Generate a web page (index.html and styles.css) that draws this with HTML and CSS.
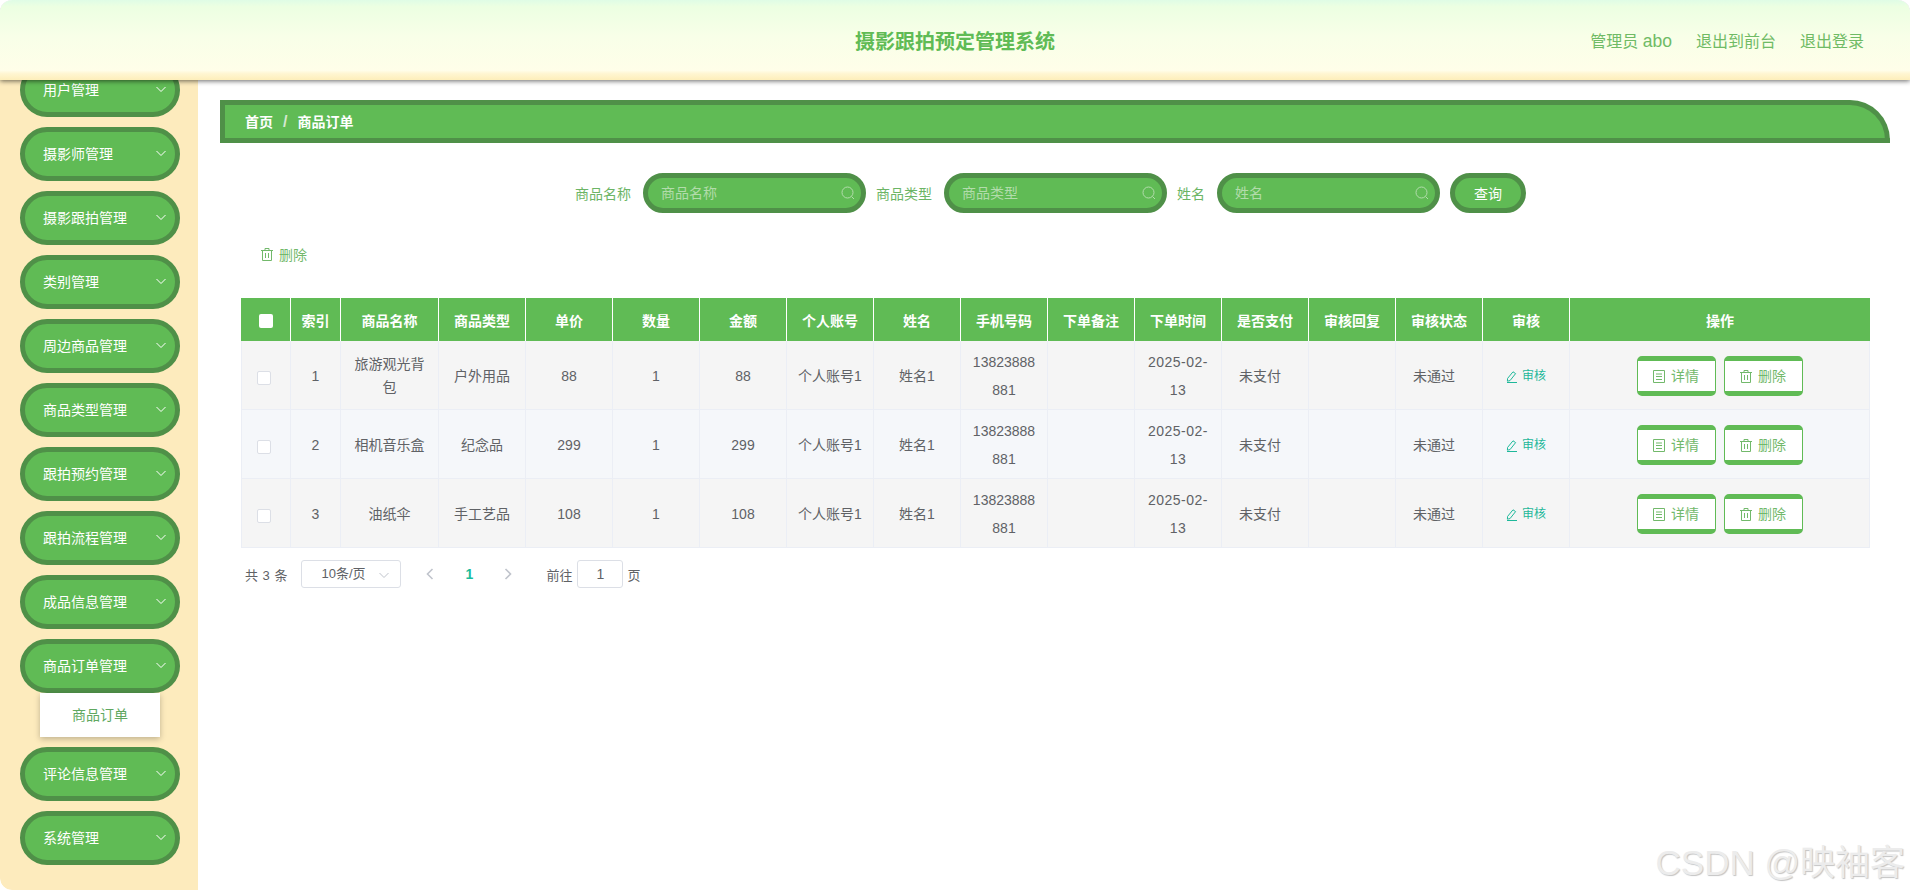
FILE: index.html
```html
<!DOCTYPE html>
<html lang="en">
  <head>
    <meta charset="UTF-8" />
    <title>摄影跟拍预定管理系统</title>
    <link rel="stylesheet" href="styles.css">
  </head>
  <body>
    <svg class="icon-defs" xmlns="http://www.w3.org/2000/svg">
      <symbol id="i-down" viewBox="0 0 12 12"><path d="M1.5 4 L6 8.5 L10.5 4" fill="none" stroke="currentColor" stroke-width="1"/></symbol>
      <symbol id="i-left" viewBox="0 0 8 12"><path d="M6.5 1 L1.5 6 L6.5 11" fill="none" stroke="currentColor" stroke-width="1.6"/></symbol>
      <symbol id="i-right" viewBox="0 0 8 12"><path d="M1.5 1 L6.5 6 L1.5 11" fill="none" stroke="currentColor" stroke-width="1.6"/></symbol>
      <symbol id="i-search" viewBox="0 0 14 14"><circle cx="6.5" cy="6.5" r="5.5" fill="none" stroke="currentColor" stroke-width="1"/><path d="M10.5 10.5 L13 13" stroke="currentColor" stroke-width="1"/></symbol>
      <symbol id="i-trash" viewBox="0 0 12 13"><path d="M0 2.5 H12 M4 2.5 V.5 H8 V2.5 M1.5 2.5 V12.5 H10.5 V2.5 M4.5 5 V10 M7.5 5 V10" fill="none" stroke="currentColor" stroke-width="1"/></symbol>
      <symbol id="i-doc" viewBox="0 0 12 13"><path d="M.5 .5 H11.5 V12.5 H.5 Z M3 4 H9 M3 6.5 H9 M3 9.5 H9" fill="none" stroke="currentColor" stroke-width="1"/></symbol>
      <symbol id="i-edit" viewBox="0 0 12 12"><path d="M7 .8 L9.6 2.6 L4 9.6 L1.4 10.2 L1.6 7.4 Z M1 11.5 H11" fill="none" stroke="currentColor" stroke-width="1"/></symbol>
    </svg>

    <div class="page">
      <header class="topbar">
        <div class="title">摄影跟拍预定管理系统</div>
        <div class="user-links">
          <span class="user-name">管理员 <span class="user-id">abo</span></span>
          <span>退出到前台</span>
          <span>退出登录</span>
        </div>
      </header>

      <div class="layout">
        <aside class="sidebar">
          <div class="menu-item">用户管理<svg class="menu-arrow"><use href="#i-down"/></svg></div>
          <div class="menu-item">摄影师管理<svg class="menu-arrow"><use href="#i-down"/></svg></div>
          <div class="menu-item">摄影跟拍管理<svg class="menu-arrow"><use href="#i-down"/></svg></div>
          <div class="menu-item">类别管理<svg class="menu-arrow"><use href="#i-down"/></svg></div>
          <div class="menu-item">周边商品管理<svg class="menu-arrow"><use href="#i-down"/></svg></div>
          <div class="menu-item">商品类型管理<svg class="menu-arrow"><use href="#i-down"/></svg></div>
          <div class="menu-item">跟拍预约管理<svg class="menu-arrow"><use href="#i-down"/></svg></div>
          <div class="menu-item">跟拍流程管理<svg class="menu-arrow"><use href="#i-down"/></svg></div>
          <div class="menu-item">成品信息管理<svg class="menu-arrow"><use href="#i-down"/></svg></div>
          <div class="menu-group">
            <div class="menu-item">商品订单管理<svg class="menu-arrow"><use href="#i-down"/></svg></div>
            <div class="submenu-item">商品订单</div>
          </div>
          <div class="menu-item">评论信息管理<svg class="menu-arrow"><use href="#i-down"/></svg></div>
          <div class="menu-item">系统管理<svg class="menu-arrow"><use href="#i-down"/></svg></div>
        </aside>

        <main class="main">
          <div class="breadcrumb">
            <b>首页</b><span class="crumb-sep">/</span><b>商品订单</b>
          </div>

          <div class="panel">
            <form class="search">
              <label>商品名称</label>
              <div class="search-input">
                <input type="text" placeholder="商品名称" />
                <svg class="search-icon"><use href="#i-search"/></svg>
              </div>
              <label>商品类型</label>
              <div class="search-input">
                <input type="text" placeholder="商品类型" />
                <svg class="search-icon"><use href="#i-search"/></svg>
              </div>
              <label>姓名</label>
              <div class="search-input">
                <input type="text" placeholder="姓名" />
                <svg class="search-icon"><use href="#i-search"/></svg>
              </div>
              <button type="button" class="search-btn">查询</button>
            </form>

            <div class="toolbar">
              <svg class="btn-icon"><use href="#i-trash"/></svg>删除
            </div>

            <table class="orders">
              <colgroup>
                <col class="col-s" /><col class="col-s" /><col class="col-name" />
                <col /><col /><col /><col /><col /><col /><col /><col /><col /><col /><col /><col /><col />
                <col class="col-ops" />
              </colgroup>
              <thead>
                <tr>
                  <th><span class="check check-head"></span></th>
                  <th>索引</th><th>商品名称</th><th>商品类型</th><th>单价</th><th>数量</th><th>金额</th>
                  <th>个人账号</th><th>姓名</th><th>手机号码</th><th>下单备注</th><th>下单时间</th>
                  <th>是否支付</th><th>审核回复</th><th>审核状态</th><th>审核</th><th>操作</th>
                </tr>
              </thead>
              <tbody>
                <tr>
                  <td><span class="check"></span></td>
                  <td>1</td><td>旅游观光背包</td><td>户外用品</td><td>88</td><td>1</td><td>88</td>
                  <td>个人账号1</td><td>姓名1</td><td class="phone">13823888881</td><td></td><td class="date">2025-02-13</td>
                  <td class="status">未支付</td><td></td><td class="status">未通过</td>
                  <td><span class="audit"><svg class="audit-icon"><use href="#i-edit"/></svg>审核</span></td>
                  <td><span class="row-btn"><svg class="btn-icon"><use href="#i-doc"/></svg>详情</span><span class="row-btn"><svg class="btn-icon"><use href="#i-trash"/></svg>删除</span></td>
                </tr>
                <tr>
                  <td><span class="check"></span></td>
                  <td>2</td><td>相机音乐盒</td><td>纪念品</td><td>299</td><td>1</td><td>299</td>
                  <td>个人账号1</td><td>姓名1</td><td class="phone">13823888881</td><td></td><td class="date">2025-02-13</td>
                  <td class="status">未支付</td><td></td><td class="status">未通过</td>
                  <td><span class="audit"><svg class="audit-icon"><use href="#i-edit"/></svg>审核</span></td>
                  <td><span class="row-btn"><svg class="btn-icon"><use href="#i-doc"/></svg>详情</span><span class="row-btn"><svg class="btn-icon"><use href="#i-trash"/></svg>删除</span></td>
                </tr>
                <tr>
                  <td><span class="check"></span></td>
                  <td>3</td><td>油纸伞</td><td>手工艺品</td><td>108</td><td>1</td><td>108</td>
                  <td>个人账号1</td><td>姓名1</td><td class="phone">13823888881</td><td></td><td class="date">2025-02-13</td>
                  <td class="status">未支付</td><td></td><td class="status">未通过</td>
                  <td><span class="audit"><svg class="audit-icon"><use href="#i-edit"/></svg>审核</span></td>
                  <td><span class="row-btn"><svg class="btn-icon"><use href="#i-doc"/></svg>详情</span><span class="row-btn"><svg class="btn-icon"><use href="#i-trash"/></svg>删除</span></td>
                </tr>
              </tbody>
            </table>

            <div class="pager">
              <span class="pager-total">共 3 条</span>
              <span class="pager-size">10条/页<svg class="pager-size-arrow"><use href="#i-down"/></svg></span>
              <svg class="pager-arrow pager-prev"><use href="#i-left"/></svg>
              <span class="pager-num">1</span>
              <svg class="pager-arrow pager-next"><use href="#i-right"/></svg>
              <span class="pager-goto">前往</span>
              <span class="pager-jump">1</span>
              <span>页</span>
            </div>
          </div>
        </main>
      </div>

      <div class="watermark">CSDN @映袖客</div>
    </div>
  </body>
</html>
```

FILE: styles.css
```css
* {
  box-sizing: border-box;
}

html,
body {
  margin: 0;
  padding: 0;
  height: 100%;
  background: #fff;
}

body {
  font-family: "Liberation Sans", "Noto Sans CJK SC", sans-serif;
  font-size: 14px;
  color: #606266;
  overflow: hidden;
}

.icon-defs {
  display: none;
}

.page {
  position: relative;
  height: 890px;
  overflow: hidden;
  border-radius: 12px;
}

.topbar {
  position: relative;
  z-index: 2;
  display: flex;
  justify-content: flex-end;
  align-items: center;
  height: 80px;
  padding-right: 46px;
  border-radius: 12px 12px 0 0;
  background: linear-gradient(180deg, #dffce6 0%, #ecffe2 8%, #f8ffe8 45%, #fffee9 88%, #fff6d2 92%, #fdeeba 100%);
  box-shadow: 0 1px 5px rgba(0, 0, 0, 0.6);
}

.title {
  position: absolute;
  left: 0;
  right: 0;
  text-align: center;
  font-size: 20px;
  font-weight: 700;
  color: #60bb55;
}

.user-links {
  position: relative;
  display: flex;
  gap: 24px;
  font-size: 16px;
  color: #6fbb65;
}

.user-id {
  font-size: 17.5px;
}

.layout {
  display: flex;
  height: 810px;
}

.sidebar {
  flex: none;
  width: 198px;
  height: 827px;
  margin-top: -17px;
  padding: 0 18px 0 20px;
  background: #fdebbd;
  border-radius: 0 0 0 12px;
}

.menu-item {
  display: flex;
  align-items: center;
  justify-content: space-between;
  height: 54px;
  margin-bottom: 10px;
  padding: 0 8px 2px 18px;
  background: #60bb55;
  border: 5px solid #4f9048;
  border-radius: 27px;
  color: #fff;
}

.menu-arrow {
  flex: none;
  width: 12px;
  height: 12px;
}

.menu-group .menu-item {
  margin-bottom: 0;
}

.submenu-item {
  height: 44px;
  margin: 0 20px 10px;
  background: #fff;
  box-shadow: 0 2px 6px rgba(0, 0, 0, 0.25);
  color: #60a860;
  line-height: 44px;
  text-align: center;
}

.main {
  flex: 1;
  padding: 20px 20px 0 22px;
}

.breadcrumb {
  display: flex;
  align-items: center;
  height: 43px;
  padding: 0 0 2px 20px;
  background: #60bb55;
  border: 5px solid #4f9048;
  border-radius: 0 40px 0 0;
  color: #fff;
}

.crumb-sep {
  margin: 3px 10px 0;
  color: #d5e8d0;
  font-weight: 700;
  font-size: 16px;
}

.panel {
  padding: 0 0 0 21px;
}

.search {
  display: flex;
  justify-content: center;
  align-items: center;
  height: 40px;
  margin-top: 30px;
  padding-right: 30px;
}

.search label {
  margin-right: 12px;
  color: #6cb565;
}

.search-input {
  position: relative;
  width: 223px;
  height: 40px;
  margin-right: 10px;
}

.search-input input {
  width: 100%;
  height: 100%;
  padding: 0 30px 0 13px;
  background: #60bb55;
  border: 5px solid #4f9048;
  border-radius: 20px;
  font: inherit;
  outline: none;
}

.search-input input::placeholder {
  color: #b2dcab;
}

.search-icon {
  position: absolute;
  top: 13px;
  right: 11px;
  width: 14px;
  height: 14px;
  color: #b2dcab;
}

.search-btn {
  width: 76px;
  height: 40px;
  background: #60bb55;
  border: 5px solid #4f9048;
  border-radius: 20px;
  color: #fff;
  font: inherit;
}

.toolbar {
  display: flex;
  align-items: center;
  height: 30px;
  margin-top: 26px;
  padding-left: 20px;
  color: #72b96b;
}

.btn-icon {
  flex: none;
  width: 12px;
  height: 13px;
  margin-right: 6px;
  vertical-align: -2px;
}

.orders {
  width: 1629px;
  margin-top: 29px;
  border-collapse: separate;
  border-spacing: 0;
  table-layout: fixed;
}

.col-s {
  width: 50px;
}

.col-name {
  width: 98px;
}

.col-ops {
  width: 300px;
}

.orders th {
  height: 43px;
  padding: 0;
  background: #60bb55;
  border-right: 1px solid #fff;
  color: #fff;
  font-weight: 700;
  text-align: center;
}

.orders th:last-child {
  border-right: 0;
}

.orders td {
  height: 69px;
  padding: 2px 10px 0;
  background: #f5f5f5;
  border-right: 1px solid #ebeef5;
  border-bottom: 1px solid #ebeef5;
  line-height: 23px;
  text-align: center;
}

.orders td:first-child {
  border-left: 1px solid #ebeef5;
}

.orders tr:nth-child(even) td {
  background: #f5f7fa;
}

.orders .phone {
  line-height: 28px;
  word-break: break-all;
}

.orders .date {
  letter-spacing: 0.5px;
  line-height: 28px;
}

.orders .status {
  padding-right: 20px;
}

.check {
  display: inline-block;
  width: 14px;
  height: 14px;
  margin: 2px 4px 0 0;
  background: #fff;
  border: 1px solid #dcdfe6;
  border-radius: 2px;
  vertical-align: middle;
}

.check-head {
  margin: 0;
  border: 0;
}

.audit {
  display: inline-flex;
  align-items: center;
  margin-top: 3px;
  color: #1eb89a;
  font-size: 12px;
}

.audit-icon {
  width: 12px;
  height: 12px;
  margin-right: 4px;
}

.row-btn {
  display: inline-block;
  width: 79px;
  height: 40px;
  margin: 0 4px;
  background: #fff;
  border: 1px solid #60bb55;
  border-width: 5px 1px;
  border-radius: 5px;
  color: #72b96b;
  line-height: 30px;
  vertical-align: middle;
}

.pager {
  display: flex;
  align-items: center;
  height: 30px;
  margin-top: 11px;
  padding-left: 4px;
  font-size: 13px;
}

.pager-total {
  margin-right: 14px;
  word-spacing: 1px;
}

.pager-size {
  position: relative;
  width: 100px;
  height: 28px;
  padding-left: 19px;
  border: 1px solid #dcdfe6;
  border-radius: 3px;
  line-height: 26px;
}

.pager-size-arrow {
  position: absolute;
  top: 8px;
  right: 10px;
  width: 12px;
  height: 12px;
  color: #c0c4cc;
}

.pager-arrow {
  flex: none;
  width: 8px;
  height: 12px;
  color: #c0c4cc;
}

.pager-prev {
  margin-left: 25px;
}

.pager-num {
  width: 14px;
  margin: 0 28px;
  color: #1abc9c;
  font-size: 14px;
  font-weight: 700;
  text-align: center;
}

.pager-goto {
  margin: 0 5px 0 34px;
}

.pager-jump {
  width: 46px;
  height: 28px;
  margin-right: 4px;
  border: 1px solid #dcdfe6;
  border-radius: 3px;
  font-size: 14px;
  line-height: 26px;
  text-align: center;
}

.watermark {
  position: absolute;
  right: 5px;
  bottom: 7px;
  color: #ececec;
  font-size: 35px;
  line-height: 40px;
  text-shadow: 1px 1px 1px #c4c4c4;
}
```
